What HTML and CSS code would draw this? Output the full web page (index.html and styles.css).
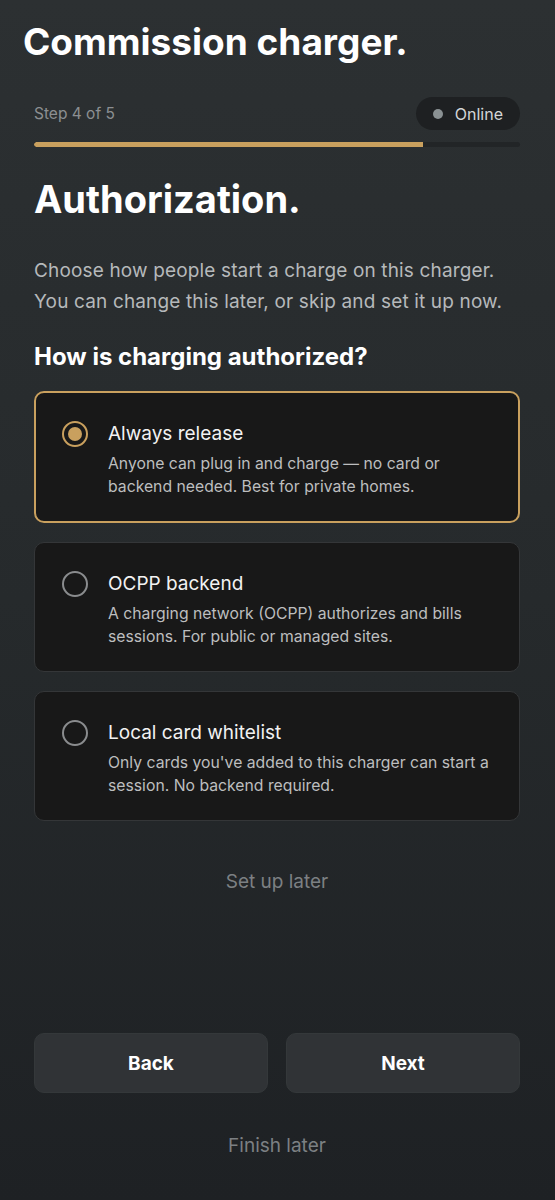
FILE: index.html
```html
<!DOCTYPE html>
<html lang="en">
<head>
<meta charset="utf-8">
<title>Commission charger</title>
<link rel="stylesheet" href="styles.css">
</head>
<body>
<div class="page">
  <h1 class="title">Commission charger.</h1>
  <main class="main">
    <div class="status-row">
      <span class="step">Step 4 of 5</span>
      <span class="pill"><span class="dot"></span>Online</span>
    </div>
    <div class="progress"><div class="progress-fill" style="width:80%"></div></div>
    <h2 class="heading">Authorization.</h2>
    <p class="intro">Choose how people start a charge on this charger.<br>You can change this later, or skip and set it up now.</p>
    <h3 class="question">How is charging authorized?</h3>
    <div class="options">
      <div class="option selected">
        <span class="radio"><span class="radio-dot"></span></span>
        <div class="option-body">
          <div class="option-title">Always release</div>
          <div class="option-desc">Anyone can plug in and charge — no card or<br>backend needed. Best for private homes.</div>
        </div>
      </div>
      <div class="option">
        <span class="radio"></span>
        <div class="option-body">
          <div class="option-title">OCPP backend</div>
          <div class="option-desc">A charging network (OCPP) authorizes and bills<br>sessions. For public or managed sites.</div>
        </div>
      </div>
      <div class="option">
        <span class="radio"></span>
        <div class="option-body">
          <div class="option-title">Local card whitelist</div>
          <div class="option-desc">Only cards you've added to this charger can start a<br>session. No backend required.</div>
        </div>
      </div>
    </div>
    <div class="link later">Set up later</div>
    <div class="spacer"></div>
    <div class="buttons">
      <button class="btn">Back</button>
      <button class="btn">Next</button>
    </div>
    <div class="link finish">Finish later</div>
  </main>
</div>
</body>
</html>
```

FILE: styles.css
```css
* { box-sizing: border-box; }
html, body { margin: 0; padding: 0; }
body {
  background: linear-gradient(180deg, #2c3032 0%, #262a2c 50%, #1e2124 100%);
  min-height: 1200px;
  font-family: Inter, "Noto Sans", sans-serif;
  color: #ffffff;
}
.page {
  min-height: 1200px;
  display: flex;
  flex-direction: column;
  padding: 20px 35px 0 34px;
}
.title {
  margin: 0 0 0 -11px;
  font-size: 37px;
  font-weight: 700;
  line-height: 44px;
}
.main { display: flex; flex-direction: column; flex: 1; }
.status-row {
  margin-top: 33px;
  display: flex;
  justify-content: space-between;
  align-items: center;
}
.step { font-size: 15.5px; color: #8c8f92; }
.pill {
  display: flex;
  align-items: center;
  gap: 12px;
  height: 33px;
  padding: 0 17px 0 17px;
  border-radius: 17px;
  background: #1e2022;
  font-size: 16px;
  color: #d4d6d7;
}
.dot { width: 10px; height: 10px; border-radius: 50%; background: #8a9193; }
.progress {
  margin-top: 12px;
  height: 5px;
  border-radius: 3px;
  background: #222527;
  overflow: hidden;
}
.progress-fill { height: 100%; background: #c9a05e; border-radius: 3px 0 0 3px; }
.heading {
  margin: 30px 0 0;
  font-size: 38px;
  font-weight: 700;
  line-height: 44px;
}
.intro {
  margin: 34px 0 0;
  font-size: 19px;
  letter-spacing: 0.15px;
  line-height: 31px;
  color: #b6b9bb;
}
.question {
  margin: 25px 0 0;
  font-size: 24px;
  font-weight: 700;
  line-height: 30px;
}
.options {
  margin-top: 19px;
  display: flex;
  flex-direction: column;
  gap: 19px;
}
.option {
  display: flex;
  gap: 20px;
  padding: 28px 20px 23px 27px;
  background: #181818;
  border: 1px solid #343638;
  border-radius: 10px;
}
.option.selected {
  border: 2px solid #c9a05e;
  padding: 28px 19px 23px 26px;
}
.radio {
  flex: none;
  width: 26px;
  height: 26px;
  border-radius: 50%;
  border: 2px solid #8a8c8e;
  display: flex;
  align-items: center;
  justify-content: center;
}
.selected .radio { border-color: #c9a05e; }
.radio-dot { width: 14px; height: 14px; border-radius: 50%; background: #c9a05e; }
.option-body { display: flex; flex-direction: column; gap: 6px; }
.option-title { font-size: 19px; line-height: 26px; color: #f2f2f2; }
.option-desc { font-size: 15.75px; line-height: 22.5px; color: #bdbebf; }
.link { text-align: center; font-size: 19px; color: #7c8083; }
.later { margin-top: 49px; line-height: 24px; }
.spacer { flex: 1; }
.buttons {
  display: grid;
  grid-template-columns: 1fr 1fr;
  gap: 18px;
}
.btn {
  height: 60px;
  border: 1px solid #34383a;
  border-radius: 10px;
  background: #303336;
  color: #ffffff;
  font-family: Inter, "Noto Sans", sans-serif;
  font-size: 19px;
  font-weight: 700;
}
.finish { margin-top: 41px; margin-bottom: 42px; line-height: 24px; }
```
